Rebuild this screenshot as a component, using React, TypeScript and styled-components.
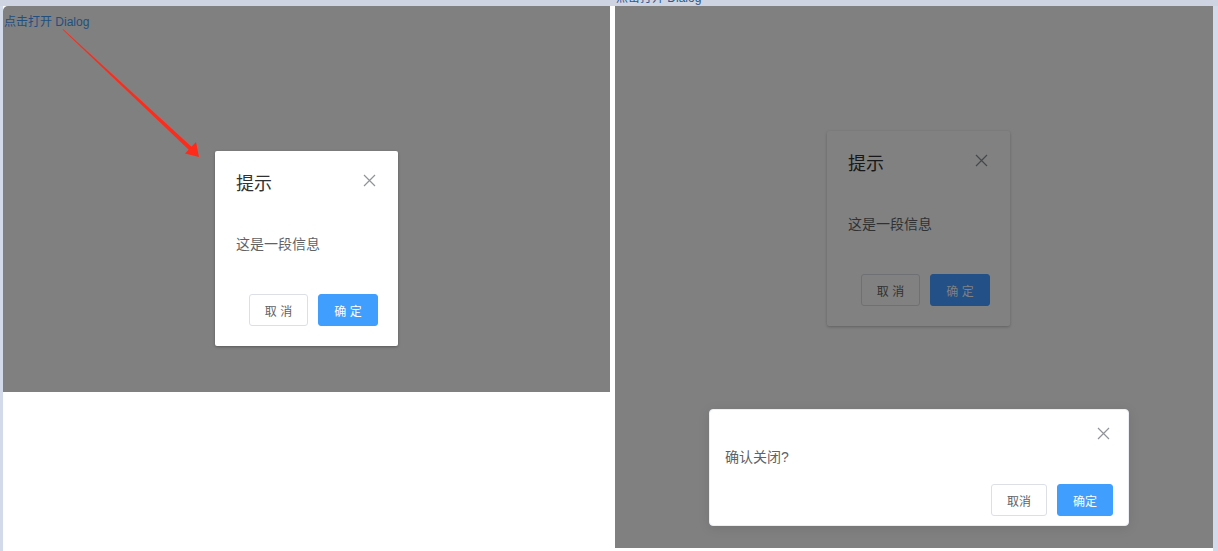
import styled, { createGlobalStyle, css } from "styled-components";

const GlobalStyle = createGlobalStyle`
  html, body {
    margin: 0;
    padding: 0;
    background: #ffffff;
  }
  body {
    font-family: "Liberation Sans", "Noto Sans CJK SC", sans-serif;
  }
`;

const Screen = styled.div`
  width: 1218px;
  height: 551px;
  display: flex;
  flex-direction: column;
  overflow: hidden;
  background: #ffffff;
`;

const TopBand = styled.div`
  height: 6px;
  flex-shrink: 0;
  background: #ced4e1;
  overflow: hidden;
  display: flex;
`;

// the right-hand page is scrolled, so only the bottom of its link peeks into the band
const BandLabel = styled.span`
  margin-left: 616px;
  margin-top: -10px;
  font-size: 12px;
  line-height: 16px;
  color: #2a5a92;
  white-space: nowrap;
`;

const Stage = styled.div`
  flex: 1;
  display: flex;
`;

const EdgeStrip = styled.div<{ $w: number }>`
  width: ${(p) => p.$w}px;
  flex-shrink: 0;
  background: #d3dbea;
`;

const Column = styled.div<{ $w: number }>`
  width: ${(p) => p.$w}px;
  flex-shrink: 0;
  display: flex;
  flex-direction: column;
  background: #ffffff;
`;

const Gap = styled.div`
  width: 5px;
  flex-shrink: 0;
  background: #ffffff;
`;

const Overlay = styled.div<{ $h: number; $round?: boolean }>`
  position: relative;
  height: ${(p) => p.$h}px;
  background: #808080;
  display: flex;
  flex-direction: column;
  ${(p) => p.$round && "border-top-left-radius: 5px;"}
`;

const OpenLink = styled.span`
  font-size: 12px;
  line-height: 16px;
  margin: 8px 0 0 1px;
  color: #204f80;
  align-self: flex-start;
`;

const Dialog = styled.div<{ $dim?: boolean }>`
  width: 183px;
  box-sizing: border-box;
  border-radius: 2px;
  display: flex;
  flex-direction: column;
  background: ${(p) => (p.$dim ? "#818181" : "#ffffff")};
  box-shadow: ${(p) =>
    p.$dim ? "0 1px 3px rgba(0, 0, 0, 0.25)" : "0 1px 3px rgba(0, 0, 0, 0.3)"};
`;

const DialogHeader = styled.div`
  padding: 21px 21px 9px 21px;
  display: flex;
  justify-content: space-between;
  align-items: flex-start;
`;

const DialogTitle = styled.span<{ $dim?: boolean }>`
  font-size: 18px;
  line-height: 24px;
  color: ${(p) => (p.$dim ? "#18181a" : "#303133")};
`;

const CloseBtn = styled.span<{ $dim?: boolean }>`
  width: 16px;
  height: 16px;
  display: flex;
  align-items: center;
  justify-content: center;
  color: ${(p) => (p.$dim ? "#45474b" : "#909399")};
`;

const DialogBody = styled.div<{ $dim?: boolean }>`
  padding: 30px 20px 30px 21px;
  font-size: 14px;
  line-height: 19px;
  color: ${(p) => (p.$dim ? "#303133" : "#606266")};
`;

const Footer = styled.div`
  padding: 10px 20px 20px;
  display: flex;
  justify-content: flex-end;
  gap: 10px;
`;

const Button = styled.button<{ $primary?: boolean; $dim?: boolean; $w: number }>`
  width: ${(p) => p.$w}px;
  height: 32px;
  box-sizing: border-box;
  border-radius: 3px;
  font-family: inherit;
  font-size: 12px;
  padding: 0;
  white-space: pre;
  ${(p) =>
    p.$primary
      ? css`
          background: ${p.$dim ? "#225087" : "#409eff"};
          border: 1px solid ${p.$dim ? "#225087" : "#409eff"};
          color: ${p.$dim ? "#808080" : "#ffffff"};
        `
      : css`
          background: ${p.$dim ? "#818181" : "#ffffff"};
          border: 1px solid ${p.$dim ? "#6e7073" : "#dcdfe6"};
          color: ${p.$dim ? "#303133" : "#606266"};
        `}
`;

const CenteredDialogSlot = styled.div`
  margin-top: 121px;
  align-self: center;
`;

const OffsetSlot = styled.div<{ $top: number; $left: number }>`
  margin-top: ${(p) => p.$top}px;
  margin-left: ${(p) => p.$left}px;
  align-self: flex-start;
`;

const MessageBox = styled.div`
  width: 420px;
  box-sizing: border-box;
  padding: 14px 15px 9px;
  background: #ffffff;
  border-radius: 4px;
  border: 1px solid #ebeef5;
  box-shadow: 0 2px 12px rgba(0, 0, 0, 0.1);
  display: flex;
  flex-direction: column;
`;

const MsgHeader = styled.div`
  height: 18px;
  display: flex;
  justify-content: flex-end;
  align-items: center;
  padding-right: 2px;
`;

const MsgText = styled.div`
  margin-top: 4px;
  font-size: 14px;
  line-height: 22px;
  color: #606266;
`;

const MsgButtons = styled.div`
  margin-top: 16px;
  display: flex;
  justify-content: flex-end;
  gap: 10px;
`;

const Arrow = styled.svg`
  position: absolute;
  left: 0;
  top: 0;
  pointer-events: none;
`;

const CloseIcon = () => (
  <svg width="13" height="13" viewBox="0 0 13 13">
    <path d="M1 1 L12 12 M12 1 L1 12" stroke="currentColor" strokeWidth="1.2" fill="none" />
  </svg>
);

type DialogProps = { dim?: boolean };

const HintDialog = ({ dim }: DialogProps) => (
  <Dialog $dim={dim}>
    <DialogHeader>
      <DialogTitle $dim={dim}>提示</DialogTitle>
      <CloseBtn $dim={dim}>
        <CloseIcon />
      </CloseBtn>
    </DialogHeader>
    <DialogBody $dim={dim}>这是一段信息</DialogBody>
    <Footer>
      <Button $dim={dim} $w={59}>
        取 消
      </Button>
      <Button $primary $dim={dim} $w={60}>
        确 定
      </Button>
    </Footer>
  </Dialog>
);

export default function App() {
  return (
    <>
      <GlobalStyle />
      <Screen>
        <TopBand>
          <BandLabel>点击打开 Dialog</BandLabel>
        </TopBand>
        <Stage>
          <EdgeStrip $w={3} />
          <Column $w={607}>
            <Overlay $h={386} $round>
              <OpenLink>点击打开 Dialog</OpenLink>
              <CenteredDialogSlot>
                <HintDialog />
              </CenteredDialogSlot>
              <Arrow width="220" height="170" viewBox="0 0 220 170">
                <polygon points="60,23 190.4,142.5 187.6,145.5 59.5,23.5" fill="#ff2a1a" />
                <polygon points="196,151 182,147.5 193,136" fill="#ff2a1a" />
              </Arrow>
            </Overlay>
          </Column>
          <Gap />
          <Column $w={598}>
            <Overlay $h={542}>
              <OffsetSlot $top={125} $left={212}>
                <HintDialog dim />
              </OffsetSlot>
              <OffsetSlot $top={83} $left={94}>
                <MessageBox>
                  <MsgHeader>
                    <CloseBtn>
                      <CloseIcon />
                    </CloseBtn>
                  </MsgHeader>
                  <MsgText>确认关闭?</MsgText>
                  <MsgButtons>
                    <Button $w={56}>取消</Button>
                    <Button $primary $w={56}>
                      确定
                    </Button>
                  </MsgButtons>
                </MessageBox>
              </OffsetSlot>
            </Overlay>
          </Column>
          <EdgeStrip $w={5} />
        </Stage>
      </Screen>
    </>
  );
}
